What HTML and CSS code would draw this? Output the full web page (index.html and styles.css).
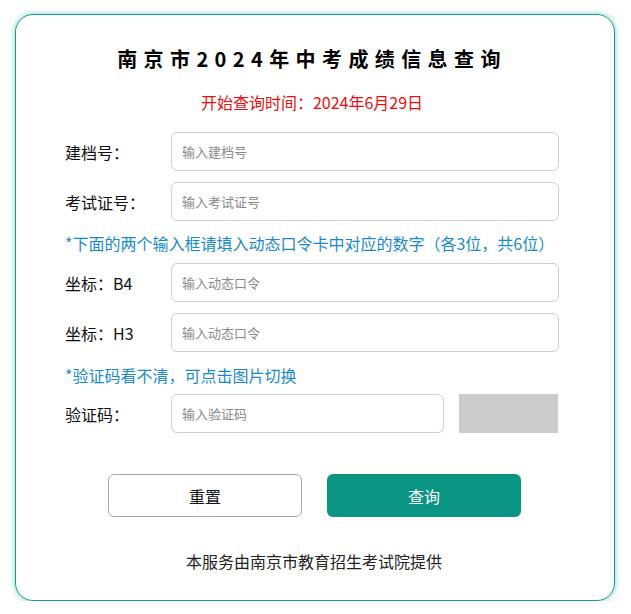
FILE: index.html
```html
<!DOCTYPE html>
<html lang="zh-CN">

<head>
    <meta charset="UTF-8">
    <title>南京市2024年中考成绩信息查询</title>
    <link rel="stylesheet" href="styles.css">
</head>

<body>
    <div class="card">
        <h2 class="title">南京市2024年中考成绩信息查询</h2>
        <p class="start-time">开始查询时间：2024年6月29日</p>

        <form class="query-form">
            <div class="form-row">
                <label class="form-label">建档号：</label>
                <input class="form-input" type="text" placeholder="输入建档号">
            </div>
            <div class="form-row">
                <label class="form-label">考试证号：</label>
                <input class="form-input" type="text" placeholder="输入考试证号">
            </div>

            <p class="tip tip-token">*下面的两个输入框请填入动态口令卡中对应的数字（各3位，共6位）</p>

            <div class="form-row">
                <label class="form-label">坐标：B4</label>
                <input class="form-input" type="text" placeholder="输入动态口令">
            </div>
            <div class="form-row">
                <label class="form-label">坐标：H3</label>
                <input class="form-input" type="text" placeholder="输入动态口令">
            </div>

            <p class="tip tip-captcha">*验证码看不清，可点击图片切换</p>

            <div class="form-row">
                <label class="form-label">验证码：</label>
                <input class="form-input captcha-input" type="text" placeholder="输入验证码">
                <div class="captcha-img" title="点击切换"></div>
            </div>

            <div class="btn-group">
                <button type="reset" class="btn btn-reset">重置</button>
                <button type="button" class="btn btn-submit">查询</button>
            </div>
        </form>

        <p class="footer">本服务由南京市教育招生考试院提供</p>
    </div>
</body>

</html>
```

FILE: styles.css
```css
body {
    margin: 0;
    padding: 14px 0 0;
    background: #fff;
    font-family: "Noto Sans CJK SC", "Liberation Sans", sans-serif;
    color: #222;
}

.card {
    box-sizing: border-box;
    width: 600px;
    height: 587px;
    margin-left: 15px;
    padding: 29px 55px 0 49px;
    border: 1px solid #1f9a8a;
    border-radius: 18px;
    box-shadow: 0 0 5px 1px rgba(40, 180, 170, 0.45);
    background: #fff;
}

.title {
    margin: 0;
    text-align: center;
    font-size: 20px;
    line-height: 30px;
    font-weight: bold;
    letter-spacing: 6.4px;
    color: #000;
}

.start-time {
    margin: 16px 0 0;
    text-align: center;
    font-size: 16px;
    line-height: 24px;
    color: #e81010;
}

.query-form {
    margin-top: 18px;
}

.form-row {
    display: flex;
    align-items: center;
    height: 39px;
    margin-bottom: 11px;
}

.form-label {
    width: 106px;
    flex-shrink: 0;
    font-size: 16px;
    color: #111;
}

.form-input {
    box-sizing: border-box;
    flex: 1;
    height: 39px;
    padding: 0 10px;
    border: 1px solid #cfcfcf;
    border-radius: 6px;
    font-family: inherit;
    font-size: 13px;
    outline: none;
}

.form-input::placeholder {
    color: #8a8a8a;
}

.captcha-input {
    flex: 0 0 273px;
}

.captcha-img {
    width: 99px;
    height: 39px;
    margin-left: 15px;
    background: #cbcbcb;
    cursor: pointer;
}

.tip {
    margin: 0;
    font-size: 16px;
    line-height: 24px;
    color: #1a8acb;
}

.tip-token {
    margin: -1px 0 8px;
}

.tip-captcha {
    margin: 0 0 7px;
}

.btn-group {
    display: flex;
    justify-content: center;
    gap: 25px;
    margin-top: 41px;
    padding-left: 5px;
}

.btn {
    width: 194px;
    height: 43px;
    border-radius: 6px;
    font-family: inherit;
    font-size: 16px;
    cursor: pointer;
}

.btn-reset {
    border: 1px solid #aaa;
    background: #fff;
    color: #111;
}

.btn-submit {
    border: none;
    background: #0a9482;
    color: #fff;
}

.footer {
    margin: 32px 0 0;
    text-align: center;
    font-size: 16px;
    line-height: 24px;
    color: #222;
    padding-left: 4px;
}
```
